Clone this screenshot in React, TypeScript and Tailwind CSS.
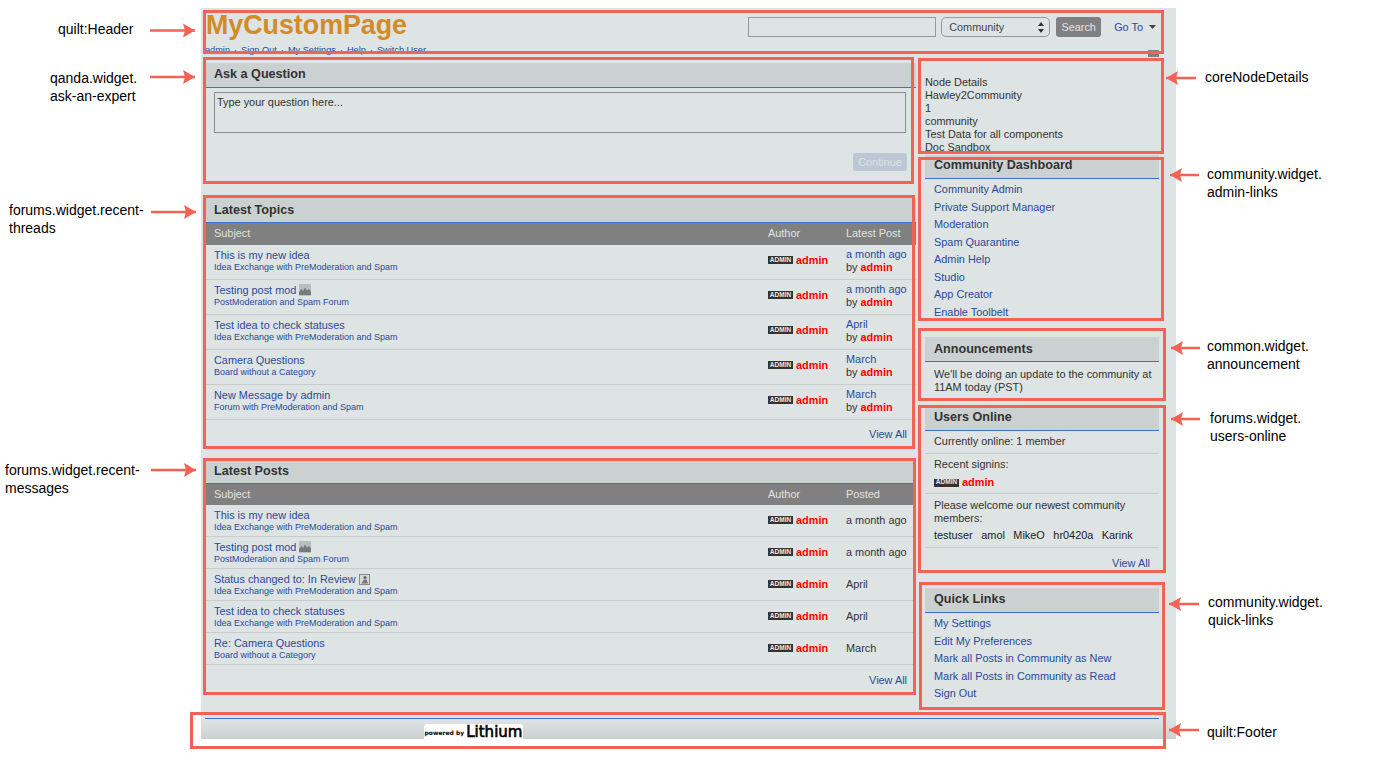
const LINK = "text-[#2a4a9c]";

const TOPICS = [
  { title: "This is my new idea", board: "Idea Exchange with PreModeration and Spam", when: "a month ago" },
  { title: "Testing post mod", board: "PostModeration and Spam Forum", when: "a month ago", icon: "image" },
  { title: "Test idea to check statuses", board: "Idea Exchange with PreModeration and Spam", when: "April" },
  { title: "Camera Questions", board: "Board without a Category", when: "March" },
  { title: "New Message by admin", board: "Forum with PreModeration and Spam", when: "March" },
];

const POSTS = [
  { title: "This is my new idea", board: "Idea Exchange with PreModeration and Spam", when: "a month ago" },
  { title: "Testing post mod", board: "PostModeration and Spam Forum", when: "a month ago", icon: "image" },
  { title: "Status changed to: In Review", board: "Idea Exchange with PreModeration and Spam", when: "April", icon: "status" },
  { title: "Test idea to check statuses", board: "Idea Exchange with PreModeration and Spam", when: "April" },
  { title: "Re: Camera Questions", board: "Board without a Category", when: "March" },
];

const DASHBOARD = ["Community Admin", "Private Support Manager", "Moderation", "Spam Quarantine", "Admin Help", "Studio", "App Creator", "Enable Toolbelt"];
const QUICK = ["My Settings", "Edit My Preferences", "Mark all Posts in Community as New", "Mark all Posts in Community as Read", "Sign Out"];

const ARROWS = [
  { tip: 195, y: 30.5, tail: 150 },
  { tip: 195, y: 77, tail: 150 },
  { tip: 196, y: 212, tail: 151 },
  { tip: 196, y: 470, tail: 151 },
  { tip: 1166, y: 78, tail: 1196 },
  { tip: 1170, y: 175, tail: 1199 },
  { tip: 1171, y: 348, tail: 1200 },
  { tip: 1171, y: 419, tail: 1200 },
  { tip: 1169, y: 604, tail: 1199 },
  { tip: 1169, y: 730, tail: 1199 },
];

function WidgetHeader({ title, className }: { title: string; className?: string }) {
  return (
    <div className={`flex items-center border-b border-[#3f6fd0] bg-[#cbd0d0] pl-[8px] text-[12.6px] font-bold text-[#333] ${className ?? "h-[25px] pb-[2px]"}`}>
      {title}
    </div>
  );
}

function AdminBadge() {
  return (
    <span className="inline-flex h-[8px] w-[25px] items-center justify-center bg-[#333] text-[6.5px] font-bold leading-none text-[#e8e8e8]">
      ADMIN
    </span>
  );
}

function AdminName() {
  return <span className="font-bold text-[#f00]">admin</span>;
}

function ImageIcon() {
  return (
    <svg width="12" height="12" viewBox="0 0 12 12" className="ml-[3px] shrink-0">
      <rect width="12" height="12" fill="#b9bdbd" />
      <path d="M0 11 L0 8 L2.5 5 L4 7 L6 3.5 L8 6.5 L10 5 L12 7.5 L12 11 Z" fill="#777a7a" />
    </svg>
  );
}

function StatusIcon() {
  return (
    <svg width="11" height="11" viewBox="0 0 11 11" className="ml-[3px] shrink-0">
      <rect x="0.5" y="0.5" width="10" height="10" fill="#d5d9d9" stroke="#888" />
      <circle cx="6" cy="3.5" r="1.6" fill="#666" />
      <path d="M2.5 9.5 L5 5.5 L7.5 5.5 L9 9.5 Z" fill="#777" />
    </svg>
  );
}

function ColumnHeader({ last, className }: { last: string; className: string }) {
  return (
    <div className={`grid grid-cols-[554px_78px_1fr] items-center bg-[#808080] pl-[8px] text-[10.9px] text-[#e2e2e2] ${className}`}>
      <span>Subject</span>
      <span>Author</span>
      <span>{last}</span>
    </div>
  );
}

function Subject({ title, board, icon, className }: { title: string; board: string; icon?: string; className?: string }) {
  return (
    <div className={`min-w-0 ${className ?? ""}`}>
      <div className={`flex h-[13px] items-center text-[10.9px] leading-[13px] ${LINK}`}>
        {title}
        {icon === "image" && <ImageIcon />}
        {icon === "status" && <StatusIcon />}
      </div>
      <div className={`text-[9px] leading-[11px] ${LINK}`}>{board}</div>
    </div>
  );
}

function TopicRow({ title, board, when, icon }: { title: string; board: string; when: string; icon?: string }) {
  return (
    <div className="grid h-[35px] grid-cols-[554px_78px_1fr] items-center border-b border-[#c8cccc] pb-[3px] pl-[8px]">
      <Subject title={title} board={board} icon={icon} />
      <div className="flex items-center gap-[3px] text-[10.9px]">
        <AdminBadge />
        <AdminName />
      </div>
      <div className="text-[10.9px] leading-[13px] text-[#333]">
        <div className={LINK}>{when}</div>
        <div>
          by <AdminName />
        </div>
      </div>
    </div>
  );
}

function PostRow({ title, board, when, icon }: { title: string; board: string; when: string; icon?: string }) {
  return (
    <div className="grid h-[32px] grid-cols-[554px_78px_1fr] items-center border-b border-[#c8cccc] pb-[1px] pl-[8px]">
      <Subject title={title} board={board} icon={icon} className="mt-[1px]" />
      <div className="flex items-center gap-[3px] text-[10.9px]">
        <AdminBadge />
        <AdminName />
      </div>
      <div className="text-[10.9px] text-[#333]">{when}</div>
    </div>
  );
}

function LinkList({ items }: { items: string[] }) {
  return (
    <div className="pl-[9px] pt-[2px]">
      {items.map((item) => (
        <div key={item} className={`text-[10.9px] leading-[17.5px] ${LINK}`}>
          {item}
        </div>
      ))}
    </div>
  );
}

function Annotations() {
  return (
    <>
      <div className="absolute left-[203px] top-[10px] h-[44px] w-[961px] border-[3px] border-[#f26355]" />
      <div className="absolute left-[203px] top-[57px] h-[127px] w-[711px] border-[3px] border-[#f26355]" />
      <div className="absolute left-[203px] top-[195px] h-[254px] w-[712px] border-[3px] border-[#f26355]" />
      <div className="absolute left-[203px] top-[458px] h-[237px] w-[713px] border-[3px] border-[#f26355]" />
      <div className="absolute left-[190px] top-[712px] h-[37px] w-[976px] border-[3px] border-[#f26355]" />
      <div className="absolute left-[918px] top-[58px] h-[96px] w-[246px] border-[3px] border-[#f26355]" />
      <div className="absolute left-[918px] top-[157px] h-[164px] w-[246px] border-[3px] border-[#f26355]" />
      <div className="absolute left-[918px] top-[328px] h-[73px] w-[248px] border-[3px] border-[#f26355]" />
      <div className="absolute left-[918px] top-[405px] h-[168px] w-[248px] border-[3px] border-[#f26355]" />
      <div className="absolute left-[919px] top-[582px] h-[128px] w-[246px] border-[3px] border-[#f26355]" />

      <svg className="pointer-events-none absolute left-0 top-0" width="1394" height="762">
        {ARROWS.map((a) => {
          const dir = a.tail < a.tip ? -1 : 1;
          return (
            <g key={`${a.tip}-${a.y}`} fill="#f26355">
              <rect x={Math.min(a.tail, a.tip)} y={a.y - 1.25} width={Math.abs(a.tail - a.tip)} height={2.5} />
              <path
                d={`M${a.tip} ${a.y} L${a.tip + dir * 12} ${a.y - 7} L${a.tip + dir * 10} ${a.y} L${a.tip + dir * 12} ${a.y + 7} Z`}
              />
            </g>
          );
        })}
      </svg>

      <div className="text-[14px] leading-[18px] text-black">
        <div className="absolute left-[58px] top-[20px]">quilt:Header</div>
        <div className="absolute left-[50px] top-[69px]">
          qanda.widget.
          <br />
          ask-an-expert
        </div>
        <div className="absolute left-[9px] top-[201px]">
          forums.widget.recent-
          <br />
          threads
        </div>
        <div className="absolute left-[5px] top-[461px]">
          forums.widget.recent-
          <br />
          messages
        </div>
        <div className="absolute left-[1205px] top-[68px]">coreNodeDetails</div>
        <div className="absolute left-[1207px] top-[165px]">
          community.widget.
          <br />
          admin-links
        </div>
        <div className="absolute left-[1207px] top-[337px]">
          common.widget.
          <br />
          announcement
        </div>
        <div className="absolute left-[1210px] top-[409px]">
          forums.widget.
          <br />
          users-online
        </div>
        <div className="absolute left-[1208px] top-[593px]">
          community.widget.
          <br />
          quick-links
        </div>
        <div className="absolute left-[1207px] top-[723px]">quilt:Footer</div>
      </div>
    </>
  );
}

export default function App() {
  return (
    <div className="relative h-[762px] w-[1394px] overflow-hidden bg-white pt-[8px] font-['Liberation_Sans',Arial,sans-serif]">
      <div className="ml-[201px] flex h-[731px] w-[975px] flex-col bg-[#dee3e3]">
        {/* Header */}
        <div className="flex h-[38px] items-start justify-between pl-[5px] pr-[20px]">
          <div className="text-[26.8px] font-bold leading-[34px] text-[#d28b25]">MyCustomPage</div>
          <div className="flex items-center pt-[9px] text-[10.9px]">
            <input className="h-[20px] w-[188px] border border-[#999] bg-[#dee3e3]" />
            <div className="ml-[5px] flex h-[20px] w-[109px] items-center justify-between rounded-[5px] border border-[#999] pl-[7px] pr-[5px] text-[#444]">
              Community
              <svg width="6" height="11" viewBox="0 0 6 11">
                <path d="M3 0 L6 4 L0 4 Z M3 11 L0 7 L6 7 Z" fill="#333" />
              </svg>
            </div>
            <button className="ml-[6px] h-[20px] w-[45px] rounded-[3px] bg-[#808080] text-[10.9px] text-[#e2e2e2]">Search</button>
            <span className={`ml-[13px] ${LINK}`}>Go To</span>
            <svg className="ml-[6px]" width="7" height="4" viewBox="0 0 7 4">
              <path d="M0 0 L7 0 L3.5 4 Z" fill="#444" />
            </svg>
          </div>
        </div>
        <div className="flex h-[17px] items-start justify-between pl-[4px] pr-[17px]">
          <div className={`flex gap-[4px] text-[9.2px] leading-[9px] ${LINK}`}>
            <span>admin</span>
            <span>·</span>
            <span>Sign Out</span>
            <span>·</span>
            <span>My Settings</span>
            <span>·</span>
            <span>Help</span>
            <span>·</span>
            <span>Switch User</span>
          </div>
          <div className="mt-[4px] flex h-[7px] w-[11px] items-center justify-center bg-[#808080]">
            <div className="h-[1px] w-[5px] bg-[#ccc]" />
          </div>
        </div>

        {/* Main columns */}
        <div className="flex h-[655px] pl-[5px]">
          <div className="w-[710px]">
            <div className="h-[135px]">
              <WidgetHeader title="Ask a Question" />
              <div className="pl-[8px] pt-[4px]">
                <textarea
                  defaultValue="Type your question here..."
                  className="block h-[41px] w-[692px] resize-none border border-[#8c8c8c] px-[2px] py-[3px] text-[10.9px] leading-[13px] text-[#333]"
                />
                <div className="mt-[20px] flex w-[693px] justify-end">
                  <button className="h-[18px] w-[54px] rounded-[3px] bg-[#bcc6d4] text-[10.9px] text-[#dde2e2]">Continue</button>
                </div>
              </div>
            </div>

            <div className="h-[263px]">
              <WidgetHeader title="Latest Topics" className="h-[25px] pt-[1px]" />
              <ColumnHeader last="Latest Post" className="h-[22px] pb-[1px]" />
              {TOPICS.map((t) => (
                <TopicRow key={t.title} {...t} />
              ))}
              <div className={`pr-[9px] pt-[8px] text-right text-[10.9px] leading-[13px] ${LINK}`}>View All</div>
            </div>

            <div>
              <WidgetHeader title="Latest Posts" className="h-[23px] pb-[2px]" />
              <ColumnHeader last="Posted" className="h-[21px]" />
              {POSTS.map((p) => (
                <PostRow key={p.title} {...p} />
              ))}
              <div className={`pr-[9px] pt-[8.5px] text-right text-[10.9px] leading-[13px] ${LINK}`}>View All</div>
            </div>
          </div>

          <div className="ml-[9px] w-[234px]">
            <div className="pb-[1px] pt-[13px] text-[10.9px] leading-[13px] text-[#333]">
              <div>Node Details</div>
              <div>Hawley2Community</div>
              <div>1</div>
              <div>community</div>
              <div>Test Data for all components</div>
              <div>Doc Sandbox</div>
            </div>

            <div>
              <WidgetHeader title="Community Dashboard" className="h-[24px] pb-[2px] pl-[9px]" />
              <LinkList items={DASHBOARD} />
            </div>

            <div className="mt-[16px]">
              <WidgetHeader title="Announcements" className="h-[25px] pl-[9px]" />
              <div className="h-[33px] pl-[9px] pt-[6px] text-[10.9px] leading-[13px] text-[#333]">
                We'll be doing an update to the community at
                <br />
                11AM today (PST)
              </div>
            </div>

            <div className="mt-[10px]">
              <WidgetHeader title="Users Online" className="h-[26px] pb-[1px] pl-[9px]" />
              <div className="text-[10.9px] leading-[13px] text-[#333]">
                <div className="h-[23px] border-b border-[#c8cccc] pl-[9px] pt-[3.5px]">Currently online: 1 member</div>
                <div className="h-[40px] border-b border-[#c8cccc] pl-[9px] pt-[4px]">
                  <div>Recent signins:</div>
                  <div className="mt-[5px] flex items-center gap-[3px]">
                    <AdminBadge />
                    <AdminName />
                  </div>
                </div>
                <div className="h-[54px] border-b border-[#c8cccc] pl-[9px] pt-[5px]">
                  <div>
                    Please welcome our newest community
                    <br />
                    members:
                  </div>
                  <div className="mt-[4px] flex gap-[8.5px] text-[#222]">
                    <span>testuser</span>
                    <span>amol</span>
                    <span>MikeO</span>
                    <span>hr0420a</span>
                    <span>Karink</span>
                  </div>
                </div>
                <div className={`h-[22px] pr-[9px] pt-[9px] text-right ${LINK}`}>View All</div>
              </div>
            </div>

            <div className="mt-[18px]">
              <WidgetHeader title="Quick Links" className="h-[25px] pb-[1px] pl-[9px]" />
              <LinkList items={QUICK} />
            </div>
          </div>
        </div>

        {/* Footer */}
        <div className="mx-[4px] h-[21px] w-[954px] border-t border-[#3f6fd0]" />
      </div>
      <div className="absolute left-[201px] top-[719px] h-[20px] w-[975px] bg-gradient-to-b from-[#dee3e3] to-[#cbd0d0]">
        <div className="absolute left-[223px] top-[5px] flex h-[15px] w-[99px] items-center justify-center gap-[2px] whitespace-nowrap rounded-t-[3px] bg-white pt-[1px] text-black">
          <span className="font-['DejaVu_Sans',sans-serif] text-[6px] font-bold">powered by</span>
          <span className="font-['DejaVu_Sans',sans-serif] text-[15px] leading-none [-webkit-text-stroke:0.6px_black]">Lithium</span>
        </div>
      </div>
      <Annotations />
    </div>
  );
}
